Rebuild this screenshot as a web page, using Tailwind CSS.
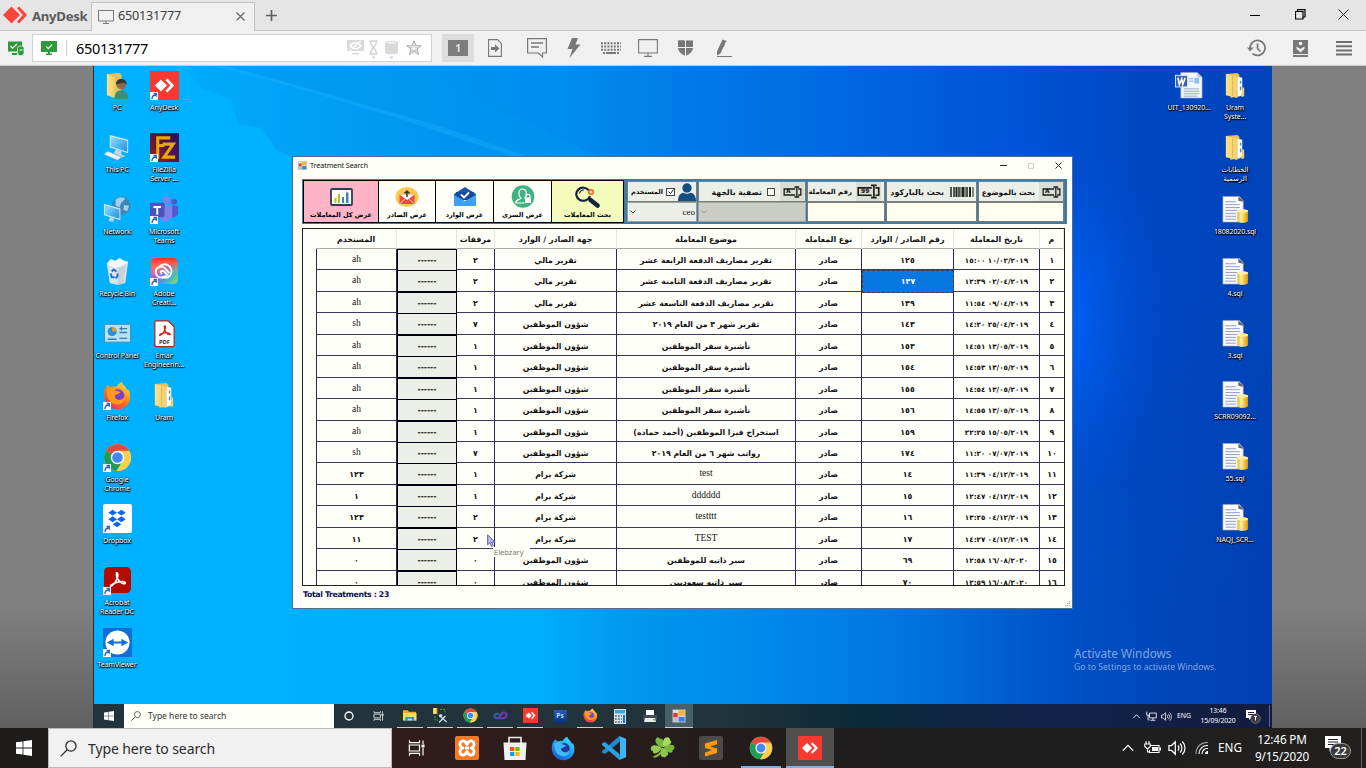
<!DOCTYPE html>
<html lang="en">
<head>
<meta charset="utf-8">
<title>AnyDesk - 650131777</title>
<script src="https://cdn.jsdelivr.net/npm/@tailwindcss/browser@4"></script>
</head>
<body class="w-[1366px] h-[768px] overflow-hidden flex flex-col font-['Noto_Sans','DejaVu_Sans',sans-serif] bg-[#808080]">

<svg width="0" height="0" class="absolute">
  <defs>
    <linearGradient id="gFold" x1="0" x2="1"><stop offset="0" stop-color="#fbe08c"/><stop offset="1" stop-color="#f3cf6a"/></linearGradient>
    <linearGradient id="gGold" x1="0" x2="1"><stop offset="0" stop-color="#e9b422"/><stop offset=".35" stop-color="#fff0a0"/><stop offset="1" stop-color="#d99000"/></linearGradient>
    <linearGradient id="gCC" x1="0" y1="0" x2="1" y2="1"><stop offset="0" stop-color="#ff3b30"/><stop offset=".3" stop-color="#f04fb0"/><stop offset=".5" stop-color="#8a5cf0"/><stop offset=".7" stop-color="#30b0e0"/><stop offset="1" stop-color="#a0e040"/></linearGradient>
    <linearGradient id="gCC2" x1="0" y1="0" x2="0" y2="1"><stop offset="0" stop-color="#ff2a2a"/><stop offset=".35" stop-color="#ff8a1e" stop-opacity=".5"/><stop offset=".7" stop-color="#ffe02a" stop-opacity="0"/></linearGradient>
    <linearGradient id="gFF" x1=".8" y1="0" x2=".2" y2="1"><stop offset="0" stop-color="#ffe23c"/><stop offset=".45" stop-color="#ff8a16"/><stop offset="1" stop-color="#f0265a"/></linearGradient>
    <linearGradient id="gFD" x1=".8" y1="0" x2=".2" y2="1"><stop offset="0" stop-color="#3fe0f5"/><stop offset=".5" stop-color="#1f9bf0"/><stop offset="1" stop-color="#1a57d0"/></linearGradient>
    <linearGradient id="gFZ" x1="0" y1="1" x2="1" y2="0"><stop offset="0" stop-color="#a02010"/><stop offset=".5" stop-color="#5a1440"/><stop offset="1" stop-color="#20106a"/></linearGradient>
    <linearGradient id="gScr" x1="0" y1="0" x2="1" y2="1"><stop offset="0" stop-color="#8fe0ff"/><stop offset="1" stop-color="#1f8fe0"/></linearGradient>

    <symbol id="win" viewBox="0 0 16 16"><path fill="currentColor" d="M0 2.3 6.6 1.4V7.6H0zM7.4 1.3 16 0V7.6H7.4zM0 8.4H6.6V14.6L0 13.7zM7.4 8.4H16V16L7.4 14.7z"/></symbol>
    <symbol id="mag" viewBox="0 0 16 16"><g fill="none" stroke="currentColor" stroke-width="1.2"><circle cx="10.3" cy="5.7" r="4.8"/><path d="M6.8 9.2.6 15.4"/></g></symbol>
    <symbol id="task" viewBox="0 0 16 16"><g fill="none" stroke="currentColor" stroke-width="1.2"><path d="M1 .3V2.7H11V.3M1 15.7V13.3H11V15.7M.8 5H11V11H.8zM14.5.5V4M14.5 8V15.5"/></g><path fill="currentColor" d="M13 4.5h3v3h-3z"/></symbol>
    <symbol id="adesk" viewBox="0 0 30 30"><rect width="30" height="30" fill="#f7392f"/><path fill="#fff" d="M5 15l6.3-6.2L17.600 15l-6.300 6.200zM16 9.600l2-1.900 7 7.300-7 7.300-2-1.900 5-5.400z"/></symbol>
    <symbol id="chrome" viewBox="0 0 30 30"><circle cx="15" cy="15" r="14" fill="#fcd04b"/><path fill="#df4a3d" d="M15 15 2.900 8A14 14 0 0 1 27.100 8z"/><path fill="#1f9d58" d="M15 15 2.900 8A14 14 0 0 0 14 29l6.500-11z"/><path fill="#fcd04b" d="M15 8H27.100A14 14 0 0 1 14 29l7-10z"/><circle cx="15" cy="15" r="7" fill="#fff"/><circle cx="15" cy="15" r="5.500" fill="#4588f3"/></symbol>
    <symbol id="ffox" viewBox="0 0 30 30"><path fill="url(#gFF)" d="M1 14C1 9 3 7 5 4c1 1 2 2 3 2.500 2-1 4-1 6-.5 1-2 3-4 5.500-5C20 4 23 5 25 9c1 0 1.500 0 2 1 3 8 0 19-12 19C6 29 1 22 1 14z"/><circle cx="15.500" cy="15" r="6.500" fill="#7a40c8"/><path fill="#ff9a1c" d="M4 9c4-2 7-2 9 1l5 1c-1 3-5 2-6 5 1 4 7 5 10 1 0 5-4 8-9 7-6-1-9-6-9-15z"/></symbol>
    <symbol id="ffdev" viewBox="0 0 30 30"><path fill="url(#gFD)" d="M1 14C1 9 3 7 5 4c1 1 2 2 3 2.500 2-1 4-1 6-.5 1-2 3-4 5.500-5C20 4 23 5 25 9c1 0 1.500 0 2 1 3 8 0 19-12 19C6 29 1 22 1 14z"/><circle cx="16" cy="15" r="6.500" fill="#203a9c"/><path fill="#42b8f8" d="M4 9c4-2 7-2 9 1l5 1c-1 3-5 2-6 5 1 4 7 5 10 1 0 5-4 8-9 7-6-1-9-6-9-15z"/></symbol>
    <symbol id="folder" viewBox="0 0 30 30"><path fill="#e9c15a" d="M5 3l12-1 2 2v21l-9 3z"/><path fill="#fff" d="M17 6l5 1v18l-5 2z"/><path fill="#3c8fc0" d="M19.500 10h1.500v3h-1.500zM19.500 16h1.500v4h-1.500z"/><path fill="url(#gFold)" d="M5 3l12 3v22L5 25z"/><path stroke="#d9ae4a" stroke-width=".8" fill="none" d="M12 5v21"/><path fill="#f3cf6a" d="M22 17h2v9l-3 1z"/></symbol>
    <symbol id="pcuser" viewBox="0 0 30 30"><path fill="#e9c15a" d="M4 3l13-1 2 2v20l-8 3z"/><path fill="url(#gFold)" d="M4 3l8 4v21l-8-3z"/><path fill="#3f8f78" d="M12 29c0-7 3-9 7-9s7 3 7 9z"/><circle cx="19" cy="14" r="5" fill="#8c6a4a"/><path fill="#2c3a3a" d="M13.500 14c-1-7 11-8 11 0l-3-2z"/></symbol>
    <symbol id="thispc" viewBox="0 0 30 30"><path fill="#d9e6ee" d="M7 2l19 5v14L7 15z"/><path fill="url(#gScr)" d="M8 3.500l17 4.500v11.500L8 14z"/><path fill="#c3d5df" d="M13 17l6 2v3l4 2-3 1-9-4z"/><path fill="#eef3f6" stroke="#a0b4c0" stroke-width=".6" d="M1 22l4-3 14 6-4 3z"/></symbol>
    <symbol id="network" viewBox="0 0 30 30"><circle cx="19" cy="11" r="9.500" fill="#3a87b8"/><path fill="#9fd2e8" d="M13 5c4-4 8-3 10-1l-4 4-2 5-4-2zM22 10l5 1-2 6-4-2z"/><path fill="#d9e6ee" d="M1 9l17 5v12L1 21z"/><path fill="url(#gScr)" d="M2 10.500l15 4.500v9.500L2 20z"/><path fill="#c3d5df" d="M7 23l4 1v4l-5-1z"/></symbol>
    <symbol id="bin" viewBox="0 0 30 30"><path fill="#dde4e8" d="M4 7l22-2-3 22-8 2-8-2z"/><path fill="#f6f9fa" d="M4 7l4-5 5 2 4-3 5 3 4 1-5 5-8 1z"/><path fill="#b4c0c8" d="M15 11l9-4-3 20-6 2z" opacity=".5"/><path fill="none" stroke="#1f6fd0" stroke-width="2" d="M9 15l2-2 3 2M8 17l1 4h3M15 17l0 3-2 2"/></symbol>
    <symbol id="cpanel" viewBox="0 0 30 30"><path fill="#b6e1f4" stroke="#3f8fb8" d="M1.500 5.500h27v18.500h-27z"/><circle cx="9.500" cy="13" r="4.700" fill="#2a8fd0"/><path fill="#f29a2e" d="M9.500 13V8.300a4.700 4.700 0 0 1 4.700 4.700z"/><path stroke="#2a7fae" stroke-width="1.400" d="M17 10h8M17 14h8M19 8v4M5 21h9M17 20h8"/></symbol>
    <symbol id="pdf" viewBox="0 0 30 30"><path fill="#fff" stroke="#b8231c" stroke-width="1.300" d="M6 2h13l6 6v19a1.500 1.500 0 0 1-1.500 1.500h-17A1.500 1.500 0 0 1 5 27V3z"/><path fill="none" stroke="#c8281e" stroke-width="1.300" d="M15 7c3 0-1 9-5 10 0-3 11-4 11-1-3 1-7-4-6-9z"/><text x="15" y="25.500" font-size="6" font-weight="700" text-anchor="middle" fill="#333">PDF</text></symbol>
    <symbol id="fz" viewBox="0 0 30 30"><rect width="30" height="30" fill="url(#gFZ)"/><path fill="none" stroke="#e6a800" stroke-width="3.200" d="M8 27V5H21M8 13H15M13 11.500H24L14.500 25H26"/></symbol>
    <symbol id="teams" viewBox="0 0 30 30"><circle cx="17" cy="5" r="4" fill="#7b83eb"/><circle cx="25" cy="7" r="3" fill="#5059c9"/><path fill="#5059c9" d="M21 11h8v8a5 5 0 0 1-8 3z"/><path fill="#7b83eb" d="M10 10h13v11a7 7 0 0 1-13 3z"/><rect y="8" width="15" height="15" rx="1.500" fill="#4b53bc"/><path fill="#fff" d="M3.500 11.500h8v2h-3v7h-2v-7h-3z"/></symbol>
    <symbol id="cc" viewBox="0 0 30 30"><rect x="1" y="1" width="28" height="27" rx="5" fill="url(#gCC)"/><rect x="1" y="1" width="28" height="27" rx="5" fill="url(#gCC2)"/><g fill="none" stroke="#fff" stroke-width="1.900"><path d="M17 19.500c-2 1.500-3.500 1.700-5.500 1.700a5.600 5.600 0 1 1 4-9.500l4.500 5"/><path d="M9.500 10a7.300 7.300 0 1 1 9 11.200H12"/><path d="M12 18l-1-2.500c1-2 3-1.500 4 0l4 4"/></g></symbol>
    <symbol id="dbox" viewBox="0 0 30 30"><rect width="30" height="30" rx="2" fill="#fff"/><path fill="#0a66f5" d="M10 6l4.500 3L10 12 5.500 9zM19 6l4.500 3-4.500 3-4.500-3zM10 12.800l4.500 3-4.500 3-4.500-3zM19 12.800l4.500 3-4.500 3-4.500-3zM14.500 18l4.500 3-4.500 3-4.500-3z"/></symbol>
    <symbol id="acro" viewBox="0 0 30 30"><rect x="1" y="1" width="28" height="27" rx="5" fill="#b30b00"/><path fill="none" stroke="#fff" stroke-width="1.700" d="M14 7c3.500 0 0 11-6 14-2-2 15-8 15-3-4 1.500-10-5-9-11z"/></symbol>
    <symbol id="tv" viewBox="0 0 30 30"><rect width="30" height="30" fill="#0f6fd6"/><circle cx="15" cy="15" r="12.500" fill="#fff"/><path fill="#0f6fd6" d="M4 15l7-4v3h8v-3l7 4-7 4v-3h-8v3z"/></symbol>
    <symbol id="word" viewBox="0 0 30 30"><path fill="#f2f6fd" stroke="#8fa4c8" stroke-width=".7" d="M6 1.500h17l5 5V28H6z"/><path fill="#b8c8e4" d="M23 1.500v5h5z"/><path stroke="#8da6d4" d="M14 8h5M14 10.500h5M9 18.500h16M9 21h16M9 23.500h16M9 26h14"/><rect x="20" y="7" width="5" height="6" fill="#8cc4ea"/><rect x=".5" y="4.500" width="12.500" height="12" fill="#3a62b4" stroke="#dfe8f8"/><path fill="none" stroke="#fff" stroke-width="1.600" d="M3 7l1.500 7L7 8l1 6 2.500-7"/></symbol>
    <symbol id="sql" viewBox="0 0 30 30"><path fill="#fafbff" stroke="#9aa4b8" stroke-width=".7" d="M2 1.500h17l4 4.500V28H2z"/><path fill="#5c6474" d="M18 1.500l5 4.500v1l-5-1z"/><path stroke="#8f98c8" d="M4.500 7h11M4.500 10h15M4.500 13h15M4.500 16h12M4.500 19h11M4.500 22h11M4.500 25h11"/><path fill="url(#gGold)" d="M17 16.500c0-2.400 11-2.400 11 0V27c0 2.400-11 2.400-11 0z"/><ellipse cx="22.500" cy="16.500" rx="5.500" ry="1.600" fill="#fff0a8"/></symbol>
    <symbol id="link" viewBox="0 0 8 8"><rect width="8" height="8" fill="#fff"/><path fill="none" stroke="#2560c0" stroke-width="1.300" d="M2 7c0-3 1-4 4-4M3.500 1.500H6.300V4.800"/></symbol>
    <symbol id="explorer" viewBox="0 0 15 13"><path fill="#e8b12c" d="M0 1h5l1.500 1.500H14V6H0z"/><path fill="#fbd96a" d="M0 4h14.500v8H0z"/><path fill="#2f8fe0" d="M2.500 8h9.500v4.500H9.500V10H5v2.500H2.500z"/></symbol>
    <symbol id="netic" viewBox="0 0 16 16"><g fill="none" stroke="currentColor" stroke-width="1.200"><path d="M5 3h10v7H5zM10 10v3M6.500 13.500h7M1 1v5h4M3 6v7h2"/></g></symbol>
    <symbol id="spk" viewBox="0 0 16 16"><g fill="none" stroke="currentColor" stroke-width="1.100"><path d="M.8 5.800h2.400L6.500 2.500v11L3.200 10.200H.8zM8.700 5.800c1.200 1.300 1.200 3.200 0 4.500M10.700 4c2.200 2.300 2.200 5.800 0 8.100M12.700 2.200c3.200 3.300 3.200 8.400 0 11.700"/></g></symbol>
    <symbol id="chev" viewBox="0 0 16 16"><path fill="none" stroke="currentColor" stroke-width="1.500" d="M2 11l6-6 6 6"/></symbol>
    <symbol id="forms" viewBox="0 0 16 16"><path fill="#d8dce4" stroke="#707888" stroke-width=".6" d="M.5.500h15v15H.5z"/><path fill="#e03a2c" d="M1.500 4.500h5v5h-5z"/><path fill="#f7b71c" d="M7.500 1.500h7v6h-7z"/><path fill="#3f7fe0" d="M7.500 9h7v5.500h-7z"/><path fill="#b8bcc8" d="M1.500 10.500h5v4h-5z"/></symbol>
    <symbol id="field" viewBox="0 0 28 18"><g fill="none" stroke="#1c1e1c" stroke-width="2"><path d="M18 4.500H1.500v9H18M22.500 4.500h4v9h-4M17 1.500h7M17 16.500h7M20.500 1.500V16.500"/></g></symbol>
    <symbol id="person" viewBox="0 0 18 18"><circle cx="9" cy="5" r="4.700" fill="#124f80"/><path fill="#124f80" d="M0 18c0-6 3-8 5.500-8.300L9 11l3.500-1.300C15 10 18 12 18 18z"/></symbol>
  </defs>
</svg>

<!-- AnyDesk title bar -->
<header class="h-[31px] shrink-0 bg-[#e5e5e5] border-b border-[#c3c3c3] flex items-stretch">
  <div class="w-[91px] flex items-center">
    <svg class="ml-[3px] mb-[1px]" width="24" height="18" viewBox="0 0 24 18"><path fill="#f8443a" d="M0 9l8.500-8.500L17 9l-8.500 8.500z"/><path fill="#f8443a" d="M14 2.200L16.200.5 24 9l-7.800 8.500L14 15.800 19.800 9z"/></svg>
    <span class="ml-[5px] pt-[3px] text-[13.200px] leading-none font-bold text-[#5c5c5c] tracking-[-0.300px]">AnyDesk</span>
  </div>
  <div class="w-[164px] mt-[2px] h-[29px] bg-[#f0f0f0] border border-b-0 border-[#c3c3c3] flex items-center relative">
    <svg class="ml-[6px]" width="16" height="14" viewBox="0 0 16 14" fill="none" stroke="#777"><path d="M.5.500h15v10.500H.5zM8 11v2M5 13.500h6"/></svg>
    <span class="ml-[4px] -mt-px text-[12.600px] tracking-[-0.200px] leading-none text-[#3c3c3c] w-[64px]">650131777</span>
    <svg class="ml-[54px] -mt-[2px]" width="9" height="9" viewBox="0 0 9 9" stroke="#666" stroke-width="1.200"><path d="M.5.500l8 8M8.500.500l-8 8"/></svg>
  </div>
  <svg class="ml-[11px] mt-[10px]" width="11" height="11" viewBox="0 0 11 11" stroke="#5e5e5e" stroke-width="1.700"><path d="M5.500 0v11M0 5.500h11"/></svg>
  <div class="ml-auto flex items-center pr-[17px] gap-[35px] pb-px">
    <svg width="10" height="10" stroke="#000"><path d="M0 5.500h10"/></svg>
    <svg width="11" height="11" fill="none" stroke="#000" stroke-width="1.200"><path d="M.5 2.500h7.500v7.500H.5zM2.500 2.500V.600h7.500V8H8"/></svg>
    <svg class="-ml-[3px]" width="11" height="11" stroke="#222"><path d="M.5.500l10 10M10.500.500l-10 10"/></svg>
  </div>
</header>

<!-- AnyDesk toolbar -->
<div class="h-[35px] shrink-0 bg-[#f0f0f0] border-b border-[#c8c8c8] flex items-center">
  <svg class="ml-[8px]" width="16" height="15" viewBox="0 0 16 15"><path fill="#2e9a3e" d="M0 .500h14v10H0zM4 12h5v2H4z"/><path fill="none" stroke="#fff" stroke-width="1.200" d="M2.500 5l2 2.200L9 3"/><rect x="9.500" y="5" width="6.500" height="9.500" rx="2.500" fill="#2e9a3e" stroke="#d8f0dc" stroke-width=".8"/><path stroke="#fff" d="M11.500 9h3"/></svg>
  <div class="ml-[8px] w-[400px] h-[28px] bg-white border border-[#d0d0d0] flex items-center">
    <svg class="ml-[8px]" width="16" height="14" viewBox="0 0 16 14"><path fill="#2e9a3e" d="M0 0h16v11H0zM7 11h2v1.500h2V14H5v-1.500h2z"/><path fill="none" stroke="#fff" stroke-width="1.100" d="M5.300 5.500l2 2.200 3.700-4"/></svg>
    <div class="ml-[9px] w-px h-[16px] bg-[#cfcfcf]"></div>
    <span class="ml-[9px] text-[14.500px] tracking-[-0.300px] leading-none text-black w-[73px]">650131777</span>
    <div class="ml-auto mr-[9px] flex items-center gap-[5px]">
      <svg class="mb-[2px]" width="17" height="15" viewBox="0 0 17 15"><path fill="#d9d9d9" d="M0 0h17v11H0zM5 13h7v1.500H5z"/><path fill="none" stroke="#fff" stroke-width="1.500" d="M3 6c3-4 8-4 11 0-3 3.500-8 3.500-11 0zM3 10L14 1"/></svg>
      <svg class="mt-[3px]" width="9" height="19" viewBox="0 0 9 19"><path fill="none" stroke="#cfcfcf" stroke-width="1.300" d="M.5 1h8M.5 14h8M1.500 1c0 4 2 5 3 6.500C5.500 6 7.500 5 7.500 1M1.500 14c0-4 2-5 3-6.500 1 1.500 3 2.500 3 6.500"/><circle cx="4.500" cy="17.500" r="1.400" fill="#cdd9f2"/></svg>
      <svg class="ml-[2px] mt-[3px]" width="13" height="19" viewBox="0 0 13 19"><path fill="#d9d9d9" d="M0 2.500C0 0 13 0 13 2.500v10c0 2.500-13 2.500-13 0z"/><ellipse cx="6.500" cy="2.600" rx="5" ry="1.200" fill="#f0f0f0"/><circle cx="6.500" cy="17.500" r="1.400" fill="#cdd9f2"/></svg>
      <svg class="ml-[3px]" width="16" height="16" viewBox="0 0 16 16"><path fill="none" stroke="#9a9a9a" stroke-width=".9" d="M8 .800l1.900 5h5.300l-4.200 3.300 1.500 5.400L8 11.300l-4.500 3.200L5 9.100.8 5.800h5.300z"/><path fill="none" stroke="#b5b5b5" stroke-width=".7" d="M8 4.500l1 2.800h2.600l-2 1.700.7 2.700L8 10.100l-2.300 1.600.7-2.700-2-1.700H7z"/></svg>
    </div>
  </div>
  <div class="ml-[10px] w-[32px] h-[28px] bg-[#dcdcdc] flex items-center justify-center"><div class="w-[20px] h-[16px] bg-[#7d7d7d] text-[#e6e6e6] text-[10px] font-bold leading-[16px] text-center">1</div></div>
  <svg class="ml-[14px]" width="14" height="18" viewBox="0 0 14 18"><path fill="none" stroke="#777" stroke-width="1.100" d="M.6.600h9l3.800 4v12.800H.600z"/><path fill="#777" d="M3 8h4V5.200L11.500 9.500 7 13.500V11H3z"/></svg>
  <svg class="ml-[25px]" width="20" height="20" viewBox="0 0 20 20"><path fill="none" stroke="#777" stroke-width="1.200" d="M.6.600h18.800v14.400H15.500v4L11.500 15H.600z"/><path stroke="#777" stroke-width="1.300" d="M4 5h12M4 9h8"/></svg>
  <svg class="ml-[20px]" width="14" height="20" viewBox="0 0 14 20"><path fill="#777" d="M5 0h6L8.500 6.500H13.500L2.500 20 5.500 11H.500z"/></svg>
  <svg class="ml-[20px]" width="20" height="12" viewBox="0 0 20 12"><g stroke="#777" stroke-width="2" fill="none"><path stroke-dasharray="2 1.200" d="M0 1.200h20M0 4.500h20M0 7.800h20"/><path d="M2 10.900h2M5 10.900h10M16 10.900h2"/></g></svg>
  <svg class="ml-[17px]" width="20" height="18" viewBox="0 0 20 18"><path fill="none" stroke="#777" stroke-width="1.100" d="M.6.600h18.800v13.400H.600zM10 14v3M6 17.400h8"/></svg>
  <svg class="ml-[20px]" width="15" height="16" viewBox="0 0 15 16"><path fill="#777" d="M0 .500c2-.5 5 0 7 0V7H0zM8 .500h7V7H8zM0 8h7v7.800C3 14 .3 11.500 0 8zM8 8h7c-.3 3.500-3 6-7 7.800z"/></svg>
  <svg class="ml-[23px]" width="16" height="18" viewBox="0 0 16 18"><path fill="#777" d="M6.500.500L10 2 4.500 14.500 1 16.500 1 12.500z"/><path fill="none" stroke="#777" d="M1 17.500h15M9 2L7.500 8M9.500 1.500l1 1"/></svg>
  <div class="ml-auto flex items-center pr-[14px]">
    <svg width="19" height="18" viewBox="0 0 19 18"><path fill="none" stroke="#777" stroke-width="1.700" d="M3 9a7.500 7.500 0 1 1 2.500 5.500M10.500 4.500V9.500l3 3"/><path fill="#777" d="M0 8.500h6.500L3 12.500z"/></svg>
    <svg class="ml-[27px]" width="15" height="17" viewBox="0 0 15 17"><path fill="#777" d="M0 0h15v14H0zM0 15h15v2H0z"/><circle cx="7.500" cy="3.500" r="1.800" fill="#f0f0f0"/><path fill="#f0f0f0" d="M3.500 6.500L7.500 9l4-2.500v2.300l-4 3.700-4-3.700z"/></svg>
    <svg class="ml-[28px]" width="16" height="15" viewBox="0 0 16 15"><path fill="#6e6e6e" d="M0 0h16v2H0zM0 4.200h16v2H0zM0 8.400h16v2H0zM0 12.600h16v2H0z"/></svg>
  </div>
</div>

<!-- Remote session area -->
<main class="h-[662px] shrink-0 flex bg-[linear-gradient(180deg,#808080_0,#808080_540px,#606060_662px)]">
  <div class="ml-[93px] w-[1179px] h-[662px] border-l border-[#20303c] flex flex-col">
    <div id="desk" class="relative h-[638px] w-[1178px] overflow-hidden bg-[#00adff]">
      <svg class="absolute inset-0" width="1178" height="638" viewBox="94 66 1178 638" preserveAspectRatio="none">
        <defs>
          <linearGradient id="wp" gradientUnits="userSpaceOnUse" x1="94" x2="1272" y1="0" y2="0"><stop offset="0" stop-color="#00b0ff"/><stop offset=".13" stop-color="#00a6fb"/><stop offset=".26" stop-color="#0098f2"/><stop offset=".4" stop-color="#008cf0"/><stop offset=".52" stop-color="#0078e6"/><stop offset=".66" stop-color="#0064e0"/><stop offset=".78" stop-color="#0054d6"/><stop offset=".88" stop-color="#0048c4"/><stop offset="1" stop-color="#0043ba"/></linearGradient>
          <linearGradient id="wb" gradientUnits="userSpaceOnUse" x1="94" x2="1272" y1="0" y2="0"><stop offset="0" stop-color="#00b3ff"/><stop offset=".38" stop-color="#00adff"/><stop offset=".45" stop-color="#0098f0"/><stop offset=".6" stop-color="#0084ea"/><stop offset=".7" stop-color="#0072e0"/><stop offset=".78" stop-color="#005cd0"/><stop offset=".85" stop-color="#004cc2"/><stop offset="1" stop-color="#003fb2"/></linearGradient>
          <linearGradient id="wm" gradientUnits="userSpaceOnUse" x1="0" x2="0" y1="300" y2="620"><stop offset="0" stop-color="#fff" stop-opacity="0"/><stop offset="1" stop-color="#fff"/></linearGradient>
          <mask id="mk"><rect x="94" y="66" width="1178" height="638" fill="url(#wm)"/></mask>
          <radialGradient id="glow" gradientUnits="userSpaceOnUse" cx="1040" cy="320" r="130" gradientTransform="translate(0 -160) scale(1 1.500)"><stop offset="0" stop-color="#0064fc"/><stop offset=".3" stop-color="#0060f4" stop-opacity=".85"/><stop offset="1" stop-color="#0050dc" stop-opacity="0"/></radialGradient>
        </defs>
        <rect x="94" y="66" width="1178" height="638" fill="url(#wp)"/>
        <rect x="94" y="66" width="1178" height="638" fill="url(#wb)" mask="url(#mk)"/>
        <path fill="#00b1ff" d="M94 66H185L200 88 232 100 238 124 262 128 276 150 292 157V704H94z"/>
        <path fill="#1cb0ff" opacity=".4" d="M212 66H228L330 94 440 126 530 157H515L400 119 290 86z"/>
        <path fill="#0096f0" opacity=".5" d="M228 66H420L480 100 600 157H530L440 126z"/>
        <rect x="880" y="100" width="320" height="440" fill="url(#glow)"/>
      </svg>

      <!-- Treatment Search window -->
      <section class="absolute left-[198px] top-[90px] w-[781px] h-[453px] bg-[#fffff9] border border-[#4b6f92] flex flex-col">
        <div class="h-[17px] flex items-center pl-[5px]">
          <svg width="9" height="9"><use href="#forms"/></svg>
          <span class="ml-[3px] text-[7.200px] tracking-[-0.100px] leading-none text-[#111] pt-px">Treatment Search</span>
          <div class="ml-auto mr-[10px] flex items-center gap-[21px]">
            <svg width="7" height="7" stroke="#222"><path d="M0 3.500h7"/></svg>
            <svg width="6" height="6" fill="none" stroke="#cfcfc8"><path d="M.5.500h5v5h-5z"/></svg>
            <svg width="7" height="7" stroke="#222"><path d="M.5.500l6 6M6.500.500l-6 6"/></svg>
          </div>
        </div>

        <div class="mt-[5px] ml-[9px] w-[765px] h-[45px] bg-[#3f7ba9] flex items-stretch font-['DejaVu_Sans',sans-serif]">
          <div class="ml-px flex py-px text-[6.500px] font-bold text-black leading-none">
            <button class="w-[76px] bg-[#ffb3c6] border-[1.500px] border-black flex flex-col items-center justify-end pb-[4px]">
              <svg width="23" height="18" viewBox="0 0 23 18"><rect x="1" y="1" width="21" height="16" rx="1" fill="#fffff8" stroke="#2c3e50" stroke-width="1.800"/><path fill="#b8c020" d="M4.500 10h2v5h-2zM8 6h2v9H8z"/><path fill="#3c84b8" d="M12 9h2v6h-2zM16 4.500h2.500V15H16z"/></svg>
              <span class="mt-[6px] whitespace-nowrap">عرض كل المعاملات</span>
            </button>
            <button class="w-[57px] bg-[#fffff9] border-y-[1.500px] border-r border-black flex flex-col items-center justify-end pb-[4px]">
              <svg width="24" height="20" viewBox="0 0 24 20"><ellipse cx="12" cy="10" rx="11.500" ry="10" fill="#fbc84c"/><path fill="#f04a3c" d="M4.500 7.500h15V17h-15z"/><path fill="#fff" d="M4.500 7.500h15L12 13z"/><path fill="none" stroke="#fcd0c8" d="M4.500 17l5.500-5M19.500 17L14 12"/><path fill="none" stroke="#333" stroke-width="1.500" d="M12 4v6M9.500 6.500L12 4l2.500 2.500"/></svg>
              <span class="mt-[5px] whitespace-nowrap">عرض الصادر</span>
            </button>
            <button class="w-[58px] bg-[#fffff9] border-y-[1.500px] border-r border-black flex flex-col items-center justify-end pb-[4px]">
              <svg width="24" height="19" viewBox="0 0 24 19"><path fill="#1c55ae" d="M1 7L12 0l11 7v5H1z"/><path fill="#164a9c" d="M3 5h18v8H3z"/><path fill="#3ea2f4" d="M1 8l11 6 11-6v11H1z"/><path fill="none" stroke="#fff" stroke-width="1.800" d="M8 7.500l3 3 5-5"/></svg>
              <span class="mt-[6px] whitespace-nowrap">عرض الوارد</span>
            </button>
            <button class="w-[57px] bg-[#fffff9] border-y-[1.500px] border-black flex flex-col items-center justify-end pb-[4px]">
              <svg width="24" height="23" viewBox="0 0 24 23"><circle cx="12" cy="11.500" r="11.300" fill="#3fb282"/><path fill="none" stroke="#fff" stroke-width="1.200" d="M4.500 18c.5-3.500 3.500-3.500 5.500-4.500-3-3-3-9.500 1.500-9.500s5 6.500 2 9.500M4.500 18h9"/><rect x="14" y="12.500" width="6" height="5.500" fill="#fff"/><path fill="none" stroke="#fff" stroke-width="1.200" d="M15 12.500V10.800c0-2 4-2 4 0v1.700"/></svg>
              <span class="mt-[4px] whitespace-nowrap">عرض السري</span>
            </button>
            <button class="w-[73px] bg-[#f5fbbb] border-[1.500px] border-black flex flex-col items-center justify-end pb-[4px]">
              <svg width="25" height="22" viewBox="0 0 25 22"><path fill="none" stroke="#16223c" stroke-width="2.200" d="M14 4.500A7 6.500 0 1 0 15 10"/><path fill="none" stroke="#16223c" stroke-width="1.200" d="M4.500 7.500C5 5 7 4 9 4"/><path stroke="#16223c" stroke-width="4.500" stroke-linecap="round" d="M15.500 14l7 5.500"/><circle cx="16" cy="6" r="2.300" fill="#ffe0b0" stroke="#f06a1c" stroke-width="1.600"/></svg>
              <span class="mt-[4px] whitespace-nowrap">بحث المعاملات</span>
            </button>
          </div>

          <div class="ml-[3px] py-[2px] flex gap-px text-[7.200px] font-bold text-[#111] leading-none">
            <div class="w-[70px] flex flex-col">
              <div class="h-[22px] bg-[#ecefe7] border border-[#777f78] flex items-center justify-end gap-[3px] overflow-hidden"><span class="whitespace-nowrap text-[6.600px] pt-[2px]">المستخدم</span><span class="w-[9px] h-[8px] border border-[#444] bg-white flex items-center justify-center"><svg width="6" height="5" fill="none" stroke="#222"><path d="M.5 2.500l2 2L5.500.500"/></svg></span><svg width="18" height="18"><use href="#person"/></svg></div>
              <div class="h-[20px] bg-[#ecefe7] border border-[#9aa19a] flex items-center justify-between pl-[2px] pr-[1px] font-normal font-['Liberation_Serif',serif] text-[9px]"><svg width="6" height="4" fill="none" stroke="#444"><path d="M.5.500L3 3 5.500.500"/></svg><span>ceo</span></div>
            </div>
            <div class="w-[108px] flex flex-col">
              <div class="h-[22px] bg-[#ecefe7] border border-[#777f78] flex items-center justify-end gap-[5px] overflow-hidden"><span class="whitespace-nowrap text-[7.700px] pt-[2px]">تصفية بالجهة</span><span class="w-[8px] h-[8px] border border-[#444] bg-white"></span><span class="w-[25px] h-[19px] bg-[#dbded6] flex items-center justify-center relative"><svg width="19" height="12"><use href="#field"/></svg><b class="absolute left-[6px] top-[6px] text-[6px]">A</b></span></div>
              <div class="h-[20px] bg-[#cbcec7] border border-[#a0a6a0] flex items-center pl-[2px]"><svg width="6" height="4" fill="none" stroke="#999"><path d="M.5.500L3 3 5.500.500"/></svg></div>
            </div>
            <div class="w-[78px] flex flex-col">
              <div class="h-[22px] bg-[#ecefe7] border border-[#777f78] flex items-center justify-end gap-[4px] pr-[3px] overflow-hidden"><span class="whitespace-nowrap text-[6.900px] pt-[2px]">رقم المعاملة</span><span class="w-[25px] h-[19px] bg-[#dbded6] flex items-center justify-center relative"><svg width="23" height="15"><use href="#field"/></svg><b class="absolute left-[5px] top-[6px] text-[6px]">99</b></span></div>
              <div class="h-[20px] bg-[#fffff0] border border-[#777f78]"></div>
            </div>
            <div class="w-[91px] flex flex-col">
              <div class="h-[22px] bg-[#ecefe7] border border-[#777f78] flex items-center justify-end gap-[6px] pr-[2px] overflow-hidden"><span class="whitespace-nowrap text-[8px] pt-[2px]">بحث بالباركود</span><svg width="24" height="10" stroke="#222"><path stroke-width="1.500" d="M1 0v10M4 0v10M9 0v10M17 0v10"/><path stroke-width="2" d="M6.500 0v10M13 0v10M20 0v10"/><path d="M11 0v10M15 0v10M23 0v10"/></svg></div>
              <div class="h-[20px] bg-[#fffff0] border border-[#777f78]"></div>
            </div>
            <div class="w-[86px] flex flex-col">
              <div class="h-[22px] bg-[#ecefe7] border border-[#777f78] flex items-center justify-end gap-[4px] overflow-hidden"><span class="whitespace-nowrap text-[7.400px] pt-[2px]">بحث بالموضوع</span><span class="w-[24px] h-[19px] bg-[#dbded6] flex items-center justify-center relative"><svg width="19" height="12"><use href="#field"/></svg><b class="absolute left-[6px] top-[6px] text-[6px]">A</b></span></div>
              <div class="h-[20px] bg-[#fffff0] border border-[#777f78]"></div>
            </div>
          </div>
        </div>

        <div class="mt-[4px] ml-[9px] w-[763px] h-[358px] border border-[#222] pl-[13px] overflow-hidden font-['DejaVu_Sans',sans-serif]">
          <div id="thead" class="h-[20px] w-[748px] grid grid-cols-[81px_60px_38px_122px_179px_66px_92px_86px_24px] text-[7.900px] font-bold leading-[22px] text-[#111] border-b border-[#aaa]"></div>
          <div id="tbody" class="flex flex-col w-[748px] border-l border-[#2a2a50]"></div>
        </div>
        <div class="mt-[4px] ml-[10px] text-[7.800px] leading-[10px] font-bold text-[#0c1050] font-['DejaVu_Sans',sans-serif] tracking-[-0.350px]">Total Treatments : 23</div>
        <svg class="absolute right-px bottom-px" width="6" height="6" fill="#aaa"><path d="M4 0h1.300v1.300H4zM2 2h1.300v1.300H2zM4 2h1.300v1.300H4zM0 4h1.300v1.300H0zM2 4h1.300v1.300H2zM4 4h1.300v1.300H4z"/></svg>
      </section>

      <!-- Remote pointer -->
      <div class="absolute left-[399px] top-[481px] bg-[#fffff9] pl-px w-[37px] h-[10px] text-[7.500px] leading-[10px] text-[#777]">Elebzary</div>
      <svg class="absolute left-[393px] top-[468px]" width="9" height="13" viewBox="0 0 9 13"><path fill="#b4b4f8" stroke="#5a5a9c" stroke-width=".9" d="M.6.800v10l2.300-2 1.700 3.600 1.700-.8L4.700 8.200h3.500z"/></svg>

      <div class="absolute left-[980px] top-[582px] text-white/50 leading-none"><div class="text-[11.800px]">Activate Windows</div><div class="mt-[3px] text-[8.600px] whitespace-nowrap">Go to Settings to activate Windows.</div></div>
    </div>

    <!-- Remote taskbar -->
    <div class="h-[24px] w-[1178px] flex items-center text-white bg-[linear-gradient(90deg,#22343b_0,#22343b_620px,#0c2a3a_760px,#10234a_950px,#121c3e_1178px)]">
      <div class="w-[30px] flex justify-center"><svg width="10" height="10"><use href="#win"/></svg></div>
      <div class="w-[210px] h-[24px] bg-[#fffffa] text-[#333] flex items-center pl-[7px]"><svg width="10" height="10"><use href="#mag"/></svg><span class="ml-[7px] pt-px text-[8.500px] leading-none">Type here to search</span></div>
      <div class="w-[30px] flex justify-center"><svg width="10" height="10" fill="none" stroke="#fff" stroke-width="1.300"><circle cx="5" cy="5" r="4"/></svg></div>
      <div class="w-[29px] flex justify-center"><svg width="11" height="10"><use href="#task"/></svg></div>
      <div class="ml-[4px] w-[26px] h-[24px] border-b border-[#c8d0cc] flex items-center justify-center"><svg width="14" height="13"><use href="#explorer"/></svg></div>
      <div class="ml-[4px] w-[26px] h-[24px] border-b border-[#c8d0cc] flex items-center justify-center"><svg width="15" height="15" viewBox="0 0 15 15"><path fill="url(#gGold)" d="M0 0h4.500v6H0z"/><path fill="none" stroke="#4a9a50" stroke-dasharray="2 1" d="M7 1.500h5v4M2 8v4h3"/><path stroke="#b8cce8" stroke-width="1.600" d="M7 8l6.500 6"/><path stroke="#e0e0e0" stroke-width="1.300" d="M12.500 8l-6.500 6.500"/><path fill="#e0e4ea" d="M5.500 7l3-1 1 2-2.500 1.500z"/></svg></div>
      <div class="ml-[4px] w-[26px] h-[24px] border-b border-[#c8d0cc] flex items-center justify-center"><svg width="15" height="15"><use href="#chrome"/></svg></div>
      <div class="ml-[4px] w-[26px] h-[24px] border-b border-[#c8d0cc] flex items-center justify-center"><svg width="15" height="9" viewBox="0 0 15 9" fill="none" stroke-width="2"><path stroke="#3a5ca8" d="M8 5C6 8 1.500 8 1.500 5S6 2 8 5"/><path stroke="#6a3cb0" d="M5 6c2 2 8 2 8.500-1.500S9 0 8 4"/></svg></div>
      <div class="ml-[4px] w-[26px] h-[24px] border-b border-[#c8d0cc] flex items-center justify-center"><svg width="15" height="15"><use href="#adesk"/></svg></div>
      <div class="ml-[4px] w-[26px] h-[24px] flex items-center justify-center"><div class="w-[13px] h-[13px] bg-[linear-gradient(#2a5cb8,#0c2f74)] text-[#b8dcff] text-[6.500px] font-bold leading-[12px] text-center">Ps</div></div>
      <div class="ml-[4px] w-[26px] h-[24px] border-b border-[#c8d0cc] flex items-center justify-center"><svg width="15" height="15"><use href="#ffox"/></svg></div>
      <div class="ml-[4px] w-[26px] h-[24px] flex items-center justify-center"><svg width="12" height="15" viewBox="0 0 12 15"><path fill="#d8e4ea" d="M0 0h12v15H0z"/><path fill="#36a8e0" d="M1 1h10v3.500H1z"/><path stroke="#4a6878" stroke-width="1.600" stroke-dasharray="1.800 1.200" d="M1 7h7M1 10h7M1 13h7"/><path fill="#1f6fb0" d="M9 6h2v8H9z"/></svg></div>
      <div class="ml-[4px] w-[26px] h-[24px] flex items-center justify-center"><svg width="14" height="13" viewBox="0 0 14 13"><path fill="#fff" d="M3 0h8v6H3z"/><path fill="#444c50" d="M0 5h14v5H0z"/><path fill="#e8ecec" d="M2 8h10l1 4H1z"/><path fill="#5ac050" d="M10 9h2v1.500h-2z"/></svg></div>
      <div class="ml-[2px] w-[28px] h-[24px] bg-[#4a6068] border-b border-[#c8d0cc] flex items-center justify-center"><svg width="14" height="14"><use href="#forms"/></svg></div>
      <div class="ml-auto flex items-center h-full">
        <svg width="9" height="9"><use href="#chev"/></svg>
        <svg class="ml-[5px]" width="11" height="11"><use href="#netic"/></svg>
        <svg class="ml-[4px]" width="11" height="11"><use href="#spk"/></svg>
        <span class="ml-[5px] text-[6.900px] leading-none w-[15px]">ENG</span>
        <div class="ml-[7px] w-[38px] text-center text-[6.800px] tracking-[-0.100px] leading-[10.500px]"><div>13:46</div><div>15/09/2020</div></div>
        <svg class="ml-[9px]" width="15" height="15" viewBox="0 0 15 15"><path fill="#fff" d="M0 1h10v8H5l-2 2V9H0z"/><path stroke="#223" d="M2 3.500h6M2 5.500h6"/><circle cx="9.500" cy="9.500" r="4.800" fill="#3b3b44" stroke="#99a" stroke-width=".6"/><path fill="none" stroke="#fff" d="M8 7.500h3M9.500 7.500v4"/></svg>
        <div class="ml-[8px] mr-[2px] w-px h-[22px] bg-[#5a6688]"></div>
      </div>
    </div>
  </div>
</main>

<!-- Host taskbar -->
<footer class="h-[40px] shrink-0 flex items-center text-white bg-[linear-gradient(90deg,#1f1c1b_0,#22191a_300px,#311c1c_400px,#2d1b1b_560px,#231d1d_720px,#1f1e1e_900px,#21201f_1366px)]">
  <div class="w-[48px] flex justify-center"><svg width="16" height="16"><use href="#win"/></svg></div>
  <div class="w-[344px] h-[40px] bg-[#f1f1f1] border border-[#b9b9b9] text-[#2b2b2b] flex items-center pl-[11px]"><svg width="17" height="17"><use href="#mag"/></svg><span class="ml-[11px] pt-[2px] text-[14px] tracking-[-0.100px] leading-none whitespace-nowrap">Type here to search</span></div>
  <div class="w-[48px] flex justify-center"><svg width="17" height="16"><use href="#task"/></svg></div>
  <div class="w-[50px] flex justify-center ml-[2px]"><svg width="24" height="24" viewBox="0 0 24 24"><rect width="24" height="24" rx="2" fill="#f47a28"/><path fill="none" stroke="#fff" stroke-width="2.800" stroke-linejoin="round" d="M8 12c-4-1-4-6-.5-7 3-.5 3.500 2 4.500 3.500C13 7 13.500 4.500 16.500 5c3.500 1 3.500 6-.5 7 4 1 4 6 .5 7-3 .5-3.500-2-4.500-3.500-1 1.500-1.500 4-4.500 3.500-3.500-1-3.500-6 .5-7zM10 12h4"/></svg></div>
  <div class="w-[46px] flex justify-center"><svg width="24" height="24" viewBox="0 0 24 24"><path fill="none" stroke="#eee" stroke-width="1.600" d="M6 7V1.500h12V7"/><path fill="#f2f2f2" d="M.5 6.500h23L22.500 24h-21z"/><path fill="#f25022" d="M7 11h4.300v4H7z"/><path fill="#7fba00" d="M12.300 11h4.300v4h-4.300z"/><path fill="#00a4ef" d="M7 16h4.300v4H7z"/><path fill="#ffb900" d="M12.300 16h4.300v4h-4.300z"/></svg></div>
  <div class="w-[51px] flex justify-center"><svg width="25" height="25"><use href="#ffdev"/></svg></div>
  <div class="w-[49px] flex justify-center"><svg width="24" height="24" viewBox="0 0 24 24"><path fill="#1f8ad0" d="M17.500 0v6L3 18 0 16.500V15z"/><path fill="#2aa0e8" d="M0 7.500L3 6l14.500 12v6L0 9z"/><path fill="#3cb4f8" d="M17 0l7 2.800v18.400L17 24l1-6V6z"/></svg></div>
  <div class="w-[48px] flex justify-center"><svg width="25" height="24" viewBox="0 0 25 24"><g fill="#78b83c"><path d="M12.500 11.500C6 10 4 4 6.500 2c2-1 3 0 4 1 3-1 4 4 2 8.500z"/><path fill="#a4d860" d="M13 11C12 4 15 0 18 1.500c2 0 2 2 2 3 3 0 1 6-7 6.500z"/><path d="M13.500 12c5-4 10-4 11-1 0 2-1 3-2 3 1 4-5 4-9-2z"/><path fill="#96cc50" d="M12 12C6 8 1 9 1 12c-1 2 1 3 2 3-1 4 6 3 9-3z"/><path fill="#8cc848" d="M13 12c-3 4-3 9 0 9 2 1 3 0 3-1 4 0 2-6-3-8z"/></g><path fill="none" stroke="#8fc850" stroke-width="1.600" d="M12.500 12c-1 5-4 8-9 9"/></svg></div>
  <div class="w-[50px] flex justify-center"><svg width="24" height="24" viewBox="0 0 24 24"><rect width="24" height="24" rx="2" fill="#4a4a4a"/><path fill="#ff9a0a" d="M6 7.500L18 4v4.200L11 10.500l7 2V17L6 20.500v-4L13 14l-7-2z"/></svg></div>
  <div class="w-[40px] ml-[5px] h-[40px] border-b-2 border-[#76b4ee] flex items-center justify-center pt-[2px]"><svg width="24" height="24"><use href="#chrome"/></svg></div>
  <div class="w-[48px] ml-[5px] h-[40px] bg-[#514e4e] border-b-2 border-[#76b4ee] flex items-center justify-center pt-[2px]"><svg width="24" height="24"><use href="#adesk"/></svg></div>
  <div class="ml-auto flex items-center h-full">
    <svg width="14" height="14"><use href="#chev"/></svg>
    <svg class="ml-[9px]" width="17" height="14" viewBox="0 0 17 14"><path fill="none" stroke="#fff" stroke-width="1.100" d="M6 4.500h9v7H5.500V9M2 0v3M5 0v3M.800 3h5.500v2.500L3.500 8 .800 5.500zM3.500 8v3h2"/><path fill="#fff" d="M8 6h6v4H8zM15.500 6.500H17v3h-1.500z"/></svg>
    <svg class="ml-[7px]" width="18" height="18"><use href="#spk"/></svg>
    <svg class="ml-[9px]" width="14" height="14" viewBox="0 0 14 14"><g fill="none" stroke="#fff" stroke-width="1.100"><path stroke="#aaa" d="M1 13C1 6 6 1 13 1.500"/><path d="M4 13c0-5 4-9 9-8.500M7 13c0-3.500 2.500-6 6-5.500"/></g><path fill="#fff" d="M10 13c0-2 1-3 3-3v3z"/></svg>
    <span class="ml-[9px] text-[11.700px] leading-none w-[24px]">ENG</span>
    <div class="ml-[13px] w-[54px] text-center text-[11.700px] leading-[17.500px] whitespace-nowrap tracking-[-0.150px]"><div>12:46 PM</div><div>9/15/2020</div></div>
    <svg class="ml-[16px]" width="28" height="25" viewBox="0 0 28 25"><path fill="#fff" d="M0 0h16v12H8l-3.500 3.500V12H0z"/><path stroke="#222" stroke-width="1.200" d="M3 3.500h10M3 6h10M3 8.500h7"/><rect x="5.500" y="7.500" width="20" height="15" rx="7.500" fill="#3a3a3a" stroke="#999"/><text x="15.500" y="19" font-family="Noto Sans" font-weight="600" font-size="11" fill="#fff" text-anchor="middle">22</text></svg>
    <div class="ml-[8px] mr-[4px] w-px h-[40px] bg-[#666]"></div>
  </div>
</footer>

<script>
const ar = s => String(s).replace(/\d/g, d => '٠١٢٣٤٥٦٧٨٩'[d]);
const heads = ['المستخدم','','مرفقات','جهة الصادر / الوارد','موضوع المعاملة','نوع المعاملة','رقم الصادر / الوارد','تاريخ المعاملة','م'];
document.getElementById('thead').innerHTML = heads.map(h => `<div dir="rtl" class="text-center whitespace-nowrap border-r border-[#e6e6e0]">${h}</div>`).join('');
const fin = 'تقرير مالي', emp = 'شؤون الموظفين', yar = 'شركة يرام', visa = 'تأشيرة سفر الموظفين';
const rows = [
  ['ah',2,fin,'تقرير مصاريف الدفعة الرابعة عشر',125,'15:00 10/02/2019'],
  ['ah',2,fin,'تقرير مصاريف الدفعة الثامنة عشر',137,'12:39 02/04/2019'],
  ['ah',2,fin,'تقرير مصاريف الدفعة التاسعة عشر',139,'11:54 09/04/2019'],
  ['sh',7,emp,'تقرير شهر ٣ من العام ٢٠١٩',143,'14:20 25/04/2019'],
  ['ah',1,emp,visa,153,'14:51 13/05/2019'],
  ['ah',1,emp,visa,154,'14:53 13/05/2019'],
  ['ah',1,emp,visa,155,'14:54 13/05/2019'],
  ['ah',1,emp,visa,156,'14:55 13/05/2019'],
  ['ah',1,emp,'استخراج فيزا الموظفين (أحمد حماده)',159,'22:25 15/05/2019'],
  ['sh',7,emp,'رواتب شهر ٦ من العام ٢٠١٩',174,'11:20 07/07/2019'],
  ['123',1,yar,'test',14,'11:39 04/12/2019'],
  ['1',1,yar,'dddddd',15,'12:47 04/12/2019'],
  ['123',2,yar,'testttt',16,'13:25 04/12/2019'],
  ['11',2,yar,'TEST',17,'14:27 04/12/2019'],
  ['0',0,emp,'سير ذاتيه للموظفين',69,'12:58 16/08/2020'],
  ['0',0,emp,'سير ذاتيه سعوديين',70,'12:59 16/08/2020']
];
const latin = s => /[a-z]/i.test(s);
const cell = s => `<div dir="rtl" class="text-center whitespace-nowrap border-r border-[#2a2a50]">${s}</div>`;
const free = s => latin(s) ? `<div class="text-center border-r border-[#2a2a50] font-['Liberation_Serif',serif] font-normal text-[9.500px] leading-[21px]">${s}</div>` : cell(ar(s));
document.getElementById('tbody').innerHTML = rows.map((r, i) => `<div class="h-[21.450px] shrink-0 grid grid-cols-[80px_60px_38px_122px_179px_66px_92px_86px_25px] border-b border-[#3a3a60] text-[7.800px] font-bold leading-[23px] text-[#111]">
${free(r[0])}<div class="text-center bg-[#ecefe7] border border-b-2 border-[#000010] leading-[21px] overflow-hidden tracking-[-0.100px]">------</div>${cell(ar(r[1]))}${cell(r[2])}${free(r[3])}${cell('صادر')}${i === 1
 ? `<div class="text-center bg-[#0878e0] text-white border border-dashed border-[#603028] leading-[21px]">${ar(r[4])}</div>` : cell(ar(r[4]))}<div dir="ltr" class="text-center whitespace-nowrap border-r border-[#2a2a50] [unicode-bidi:bidi-override] text-[7.200px]">${ar(r[5])}</div>${cell(ar(i + 1))}</div>`).join('');

const icons = [
  [117,71,'pcuser','PC',0],[164,71,'adesk','AnyDesk',1],[117,133,'thispc','This PC',0],[164,133,'fz','FileZilla<br>Server ...',1],
  [117,195,'network','Network',0],[164,195,'teams','Microsoft<br>Teams',1],[117,257,'bin','Recycle Bin',0],[164,257,'cc','Adobe<br>Creati...',1],
  [117,319,'cpanel','Control Panel',0],[164,319,'pdf','Emar<br>Engineerin...',0],[117,381,'ffox','Firefox',1],[164,381,'folder','Uram',0],
  [117,443,'chrome','Google<br>Chrome',1],[117,504,'dbox','Dropbox',1],[117,566,'acro','Acrobat<br>Reader DC',1],[117,628,'tv','TeamViewer',1],
  [1189,71,'word','UIT_130920...',0],[1235,71,'folder','Uram<br>Syste...',0],[1235,133,'folder','الخطابات<br>الرسمية',0],[1235,195,'sql','18082020.sql',0],
  [1235,257,'sql','4.sql',0],[1235,319,'sql','3.sql',0],[1235,380,'sql','SCRR09092...',0],[1235,442,'sql','55.sql',0],[1235,503,'sql','NAQJ_SCR...',0]
];
document.getElementById('desk').insertAdjacentHTML('beforeend', icons.map(([x,y,id,t,l]) => `<div class="absolute w-[50px] flex flex-col items-center" style="left:${x-119}px;top:${y-66.5}px">
<div class="relative w-[29px] h-[29px]"><svg width="29" height="29"><use href="#${id}"/></svg>${l ? '<svg class="absolute left-0 bottom-0" width="8" height="8"><use href="#link"/></svg>' : ''}</div>
<div class="mt-[3px] text-center text-white text-[7px] tracking-[-0.100px] leading-[9.300px] whitespace-nowrap [text-shadow:0_1px_1px_#000,0_0_2px_#000,1px_1px_1px_#000]">${t}</div></div>`).join(''));
</script>
</body>
</html>
